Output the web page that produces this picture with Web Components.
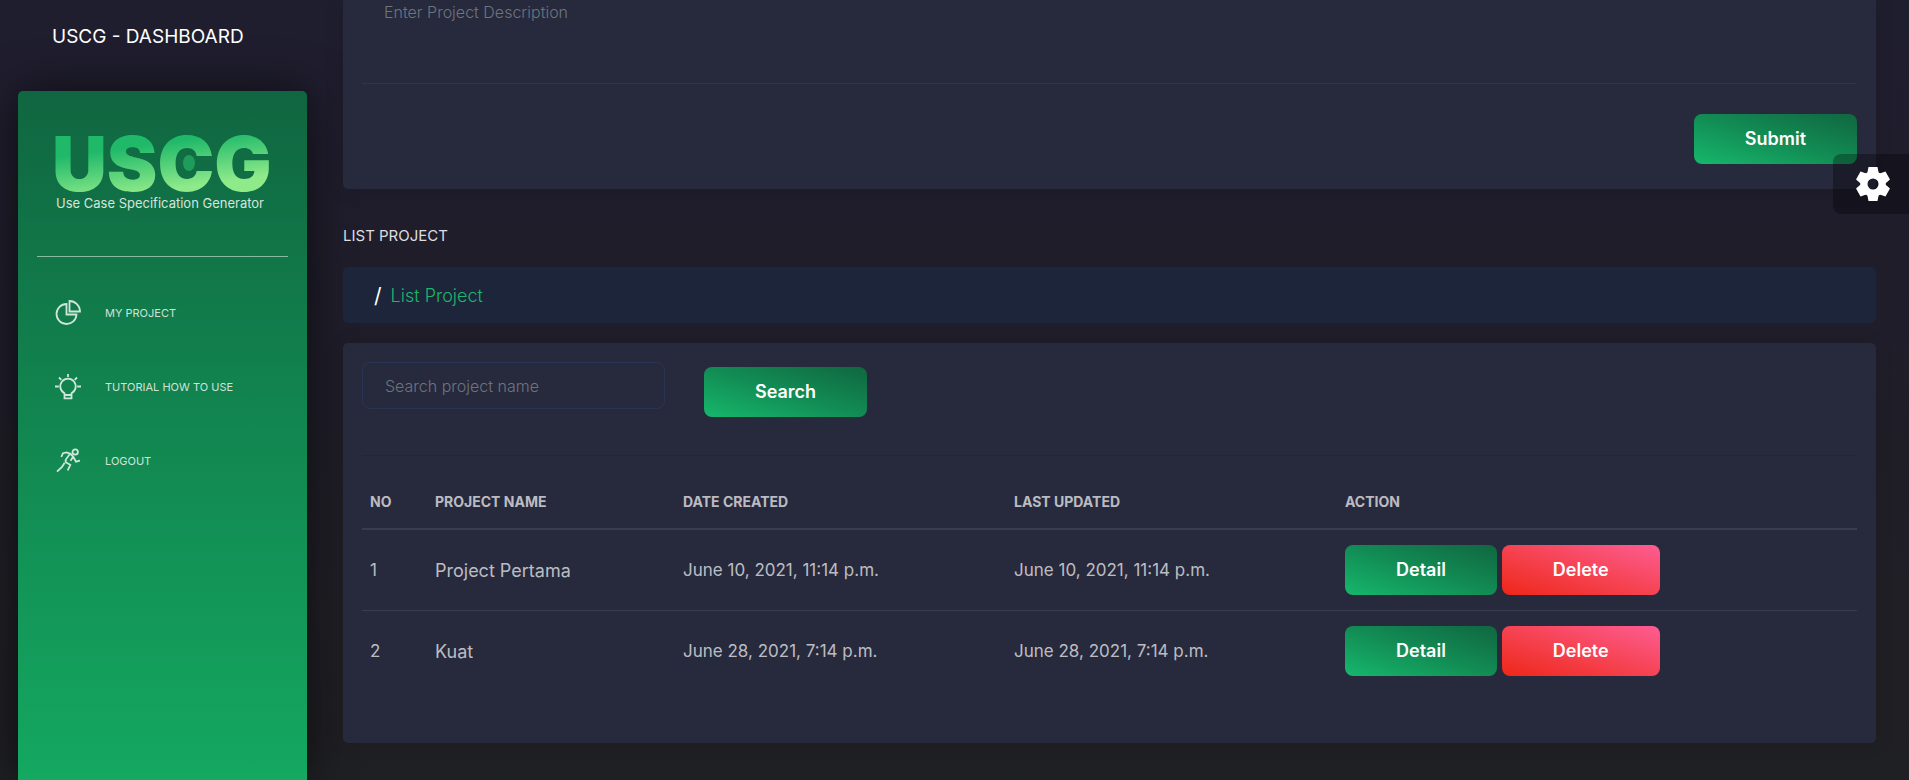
<!DOCTYPE html>
<html lang="en">
<head>
<meta charset="utf-8">
<title>USCG - Dashboard</title>
<style>
  html, body { margin: 0; height: 100%; }
  body {
    font-family: Inter, "Open Sans", sans-serif;
    color: #fff;
    background: linear-gradient(#1f1e2f, #1f1d2a 35%, #1f2023);
    overflow: hidden;
  }
</style>
</head>
<body>
<uscg-app>
  <uscg-sidebar slot="side">
    <uscg-nav-item icon="pie" href="#project">MY PROJECT</uscg-nav-item>
    <uscg-nav-item icon="bulb" href="#tutorial">TUTORIAL HOW TO USE</uscg-nav-item>
    <uscg-nav-item icon="run" href="#logout">LOGOUT</uscg-nav-item>
  </uscg-sidebar>
  <uscg-project-form></uscg-project-form>
  <uscg-section-title>LIST PROJECT</uscg-section-title>
  <uscg-breadcrumb>List Project</uscg-breadcrumb>
  <uscg-project-list></uscg-project-list>
  <uscg-settings slot="overlay"></uscg-settings>
</uscg-app>

<script>
const define = (name, html, setup) => {
  const template = document.createElement('template');
  template.innerHTML = '<style>:host,*{box-sizing:border-box}</style>' + html;
  customElements.define(name, class extends HTMLElement {
    constructor() {
      super();
      this.attachShadow({ mode: 'open' }).append(template.content.cloneNode(true));
    }
    connectedCallback() { if (setup) setup(this, this.shadowRoot); }
  });
};

define('uscg-app', `
<style>
  :host { display: flex; min-height: 100vh; position: relative; }
  main { flex: 1; min-width: 0; padding: 0 33px 37px 19px; }
</style>
<slot name="side"></slot>
<main><slot></slot></main>
<slot name="overlay"></slot>`);

define('uscg-logo', `
<style>
  :host { display: block; }
  svg { display: block; overflow: visible; }
  .word { font: 900 76px Inter, sans-serif; }
  p { margin: 0; font-size: 13px; line-height: 20px; color: #d5e5dd; white-space: nowrap; }
</style>
<svg width="214" height="58" viewBox="0 0 214 58" role="img" aria-label="USCG">
  <defs>
    <linearGradient id="g" gradientUnits="userSpaceOnUse" x1="100" y1="0" x2="108" y2="58">
      <stop offset="0.15" stop-color="#20b96a"></stop>
      <stop offset="0.95" stop-color="#8fea8a"></stop>
    </linearGradient>
  </defs>
  <text class="word" x="-4" y="56" fill="url(#g)">USCG</text>
  <ellipse cx="133" cy="28" rx="6" ry="8" fill="#1f9b5c"></ellipse>
</svg>
<p>Use Case Specification Generator</p>`);

define('uscg-sidebar', `
<style>
  :host { display: flex; flex-direction: column; flex: 0 0 323px; padding: 0 17px 0 18px; }
  h1 { margin: 0 0 17px; padding-left: 34px; font-size: 19px; font-weight: 400; line-height: 74px; white-space: nowrap; }
  aside {
    flex: 1;
    border-radius: 5px 5px 0 0;
    background: linear-gradient(#106640, #14a861);
    box-shadow: 0 0 45px rgba(0, 0, 0, .6);
  }
  uscg-logo { padding: 44px 37px 43px 38px; }
  hr { margin: 0 19px; border: 0; border-top: 1px solid rgba(255, 255, 255, .5); }
  nav { padding-top: 19px; }
</style>
<h1>USCG - DASHBOARD</h1>
<aside>
  <uscg-logo></uscg-logo>
  <hr>
  <nav><slot></slot></nav>
</aside>`);

const icons = {
  pie: '<path d="M11.500 4A10 10 0 1 0 21.500 14.500H11.500Z"/><path d="M14.500 1V11.500H25A10.500 10.500 0 0 0 14.500 1Z"/>',
  bulb: '<path d="M9.500 19.200A7.700 7.700 0 1 1 16.500 19.200V24.300H9.500ZM9.500 21H16.500"/><path d="M13 0V3M0 12.500H3.800M22.200 12.500H26M4 3.500L6.300 5.800M22 3.500L19.700 5.800"/>',
  run: '<circle cx="20.200" cy="4" r="2.700"/><path d="M6.300 9L8 5.200L11.500 4.400L15.500 5.800L18.300 8.800L21 13.600L25 12.600M14.800 6L10.800 11.600Q10 14 12 15L15.300 16.800L12.700 22.500M18 9L15.500 12.800M9.700 14.800L7 19L2 23.700"/>'
};

define('uscg-nav-item', `
<style>
  :host { display: block; }
  a { display: flex; align-items: center; gap: 24px; height: 74px; padding-left: 37px; color: rgba(255, 255, 255, .8); font-size: 11px; text-decoration: none; }
  svg { width: 26px; height: 26px; overflow: visible; fill: none; stroke: currentColor; stroke-width: 1.800; }
</style>
<a><svg viewBox="0 0 26 26" aria-hidden="true"></svg><span><slot></slot></span></a>`,
(host, root) => {
  root.querySelector('a').href = host.getAttribute('href');
  root.querySelector('svg').innerHTML = icons[host.getAttribute('icon')];
});

define('uscg-button', `
<style>
  :host { display: inline-block; }
  button {
    display: block; height: 50px; padding: 0 51px; border: 0; border-radius: 8px;
    background: linear-gradient(to bottom left, #106640, #128c54 50%, #16b76c);
    color: #fff; font: 600 18px/24px Inter, sans-serif; cursor: pointer;
  }
  :host([variant="danger"]) button { background: linear-gradient(to bottom left, #fd5d93, #f64353 50%, #ee2718); }
</style>
<button type="button"><slot></slot></button>`);

define('uscg-card', `
<style>
  :host { display: block; padding: 19px; border-radius: 5px; background: #27293d; box-shadow: 0 1px 20px rgba(0, 0, 0, .1); }
</style>
<slot></slot>`);

define('uscg-project-form', `
<style>
  :host { display: block; }
  uscg-card { padding: 0 19px 25px; border-radius: 0 0 5px 5px; }
  textarea {
    display: block; width: 100%; height: 84px; margin-bottom: 30px; padding: 0 22px; resize: none;
    border: 0; border-bottom: 1px solid #2b3553; background: transparent; color: #fff;
    font: 300 16px/24px Inter, sans-serif; outline: 0;
  }
  textarea::placeholder { color: #6c757d; opacity: 1; }
  .actions { display: flex; justify-content: flex-end; }
</style>
<uscg-card>
  <textarea aria-label="Project description" placeholder="Enter Project Description"></textarea>
  <div class="actions"><uscg-button>Submit</uscg-button></div>
</uscg-card>`);

define('uscg-section-title', `
<style>
  :host { display: block; padding: 35px 0 19px; }
  h2 { margin: 0; font-size: 15px; line-height: 24px; font-weight: 400; color: #dddde0; }
</style>
<h2><slot></slot></h2>`);

define('uscg-breadcrumb', `
<style>
  :host { display: block; margin-bottom: 20px; border-radius: 5px; background: #1d253b; }
  nav { display: flex; align-items: center; gap: 9px; height: 56px; padding-left: 31px; }
  .slash { font-size: 21px; }
  a { color: #1cb56b; font-size: 18px; font-weight: 300; text-decoration: none; }
</style>
<nav aria-label="Breadcrumb"><span class="slash">/</span><a href="#list"><slot></slot></a></nav>`);

const projects = [
  ['1', 'Project Pertama', 'June 10, 2021, 11:14 p.m.', 'June 10, 2021, 11:14 p.m.'],
  ['2', 'Kuat', 'June 28, 2021, 7:14 p.m.', 'June 28, 2021, 7:14 p.m.']
];

define('uscg-project-list', `
<style>
  :host { display: block; }
  uscg-card { padding-bottom: 52px; }
  form { display: flex; align-items: flex-start; gap: 39px; }
  input {
    width: 303px; height: 47px; padding: 0 22px; border: 1px solid #2b3553; border-radius: 8px;
    background: transparent; color: #fff; font: 300 16px Inter, sans-serif; outline: 0;
  }
  input::placeholder { color: #6c757d; opacity: 1; }
  form uscg-button { margin-top: 5px; }
  hr { margin: 38px 0 18px; border: 0; border-top: 1px solid rgba(0, 0, 0, .1); }
  table { width: 100%; table-layout: fixed; border-collapse: separate; border-spacing: 0; color: rgba(255, 255, 255, .7); }
  .no { width: 65px; } .name { width: 248px; } .date { width: 331px; }
  th { height: 56px; padding: 0 8px; border-bottom: 2px solid #3c3c50; text-align: left; font-size: 14px; font-weight: 700; }
  td { padding: 15px 8px; font-size: 17px; }
  td:nth-child(2) { font-size: 18px; }
  tr + tr td { border-top: 1px solid #3c3c50; }
  .actions { display: flex; gap: 5px; }
</style>
<uscg-card>
  <form>
    <input type="text" aria-label="Search project name" placeholder="Search project name">
    <uscg-button>Search</uscg-button>
  </form>
  <hr>
  <table>
    <colgroup><col class="no"><col class="name"><col class="date"><col class="date"><col></colgroup>
    <thead><tr><th>NO</th><th>PROJECT NAME</th><th>DATE CREATED</th><th>LAST UPDATED</th><th>ACTION</th></tr></thead>
    <tbody></tbody>
  </table>
</uscg-card>`,
(host, root) => {
  root.querySelector('tbody').innerHTML = projects.map(row =>
    '<tr>' + row.map(cell => `<td>${cell}</td>`).join('') +
    '<td><div class="actions"><uscg-button>Detail</uscg-button><uscg-button variant="danger">Delete</uscg-button></div></td></tr>'
  ).join('');
});

define('uscg-settings', `
<style>
  :host { position: absolute; top: 154px; right: 0; }
  button { display: flex; align-items: center; width: 76px; height: 60px; padding: 0 0 0 23px; border: 0; border-radius: 8px 0 0 8px; background: rgba(0, 0, 0, .3); }
  svg { width: 34px; height: 34px; fill: #fff; }
</style>
<button type="button" aria-label="Settings">
  <svg viewBox="-17 -17 34 34" aria-hidden="true">
    <defs>
      <mask id="hole"><rect x="-17" y="-17" width="34" height="34" fill="#fff"></rect><circle r="5.500" fill="#000"></circle></mask>
      <path id="teeth" d="M-4.500 -17H4.500L5.700 -11H-5.700ZM-4.500 17H4.500L5.700 11H-5.700Z"></path>
    </defs>
    <g mask="url(#hole)">
      <circle r="12.800"></circle>
      <use href="#teeth"></use>
      <use href="#teeth" transform="rotate(60)"></use>
      <use href="#teeth" transform="rotate(120)"></use>
    </g>
  </svg>
</button>`);
</script>
</body>
</html>
